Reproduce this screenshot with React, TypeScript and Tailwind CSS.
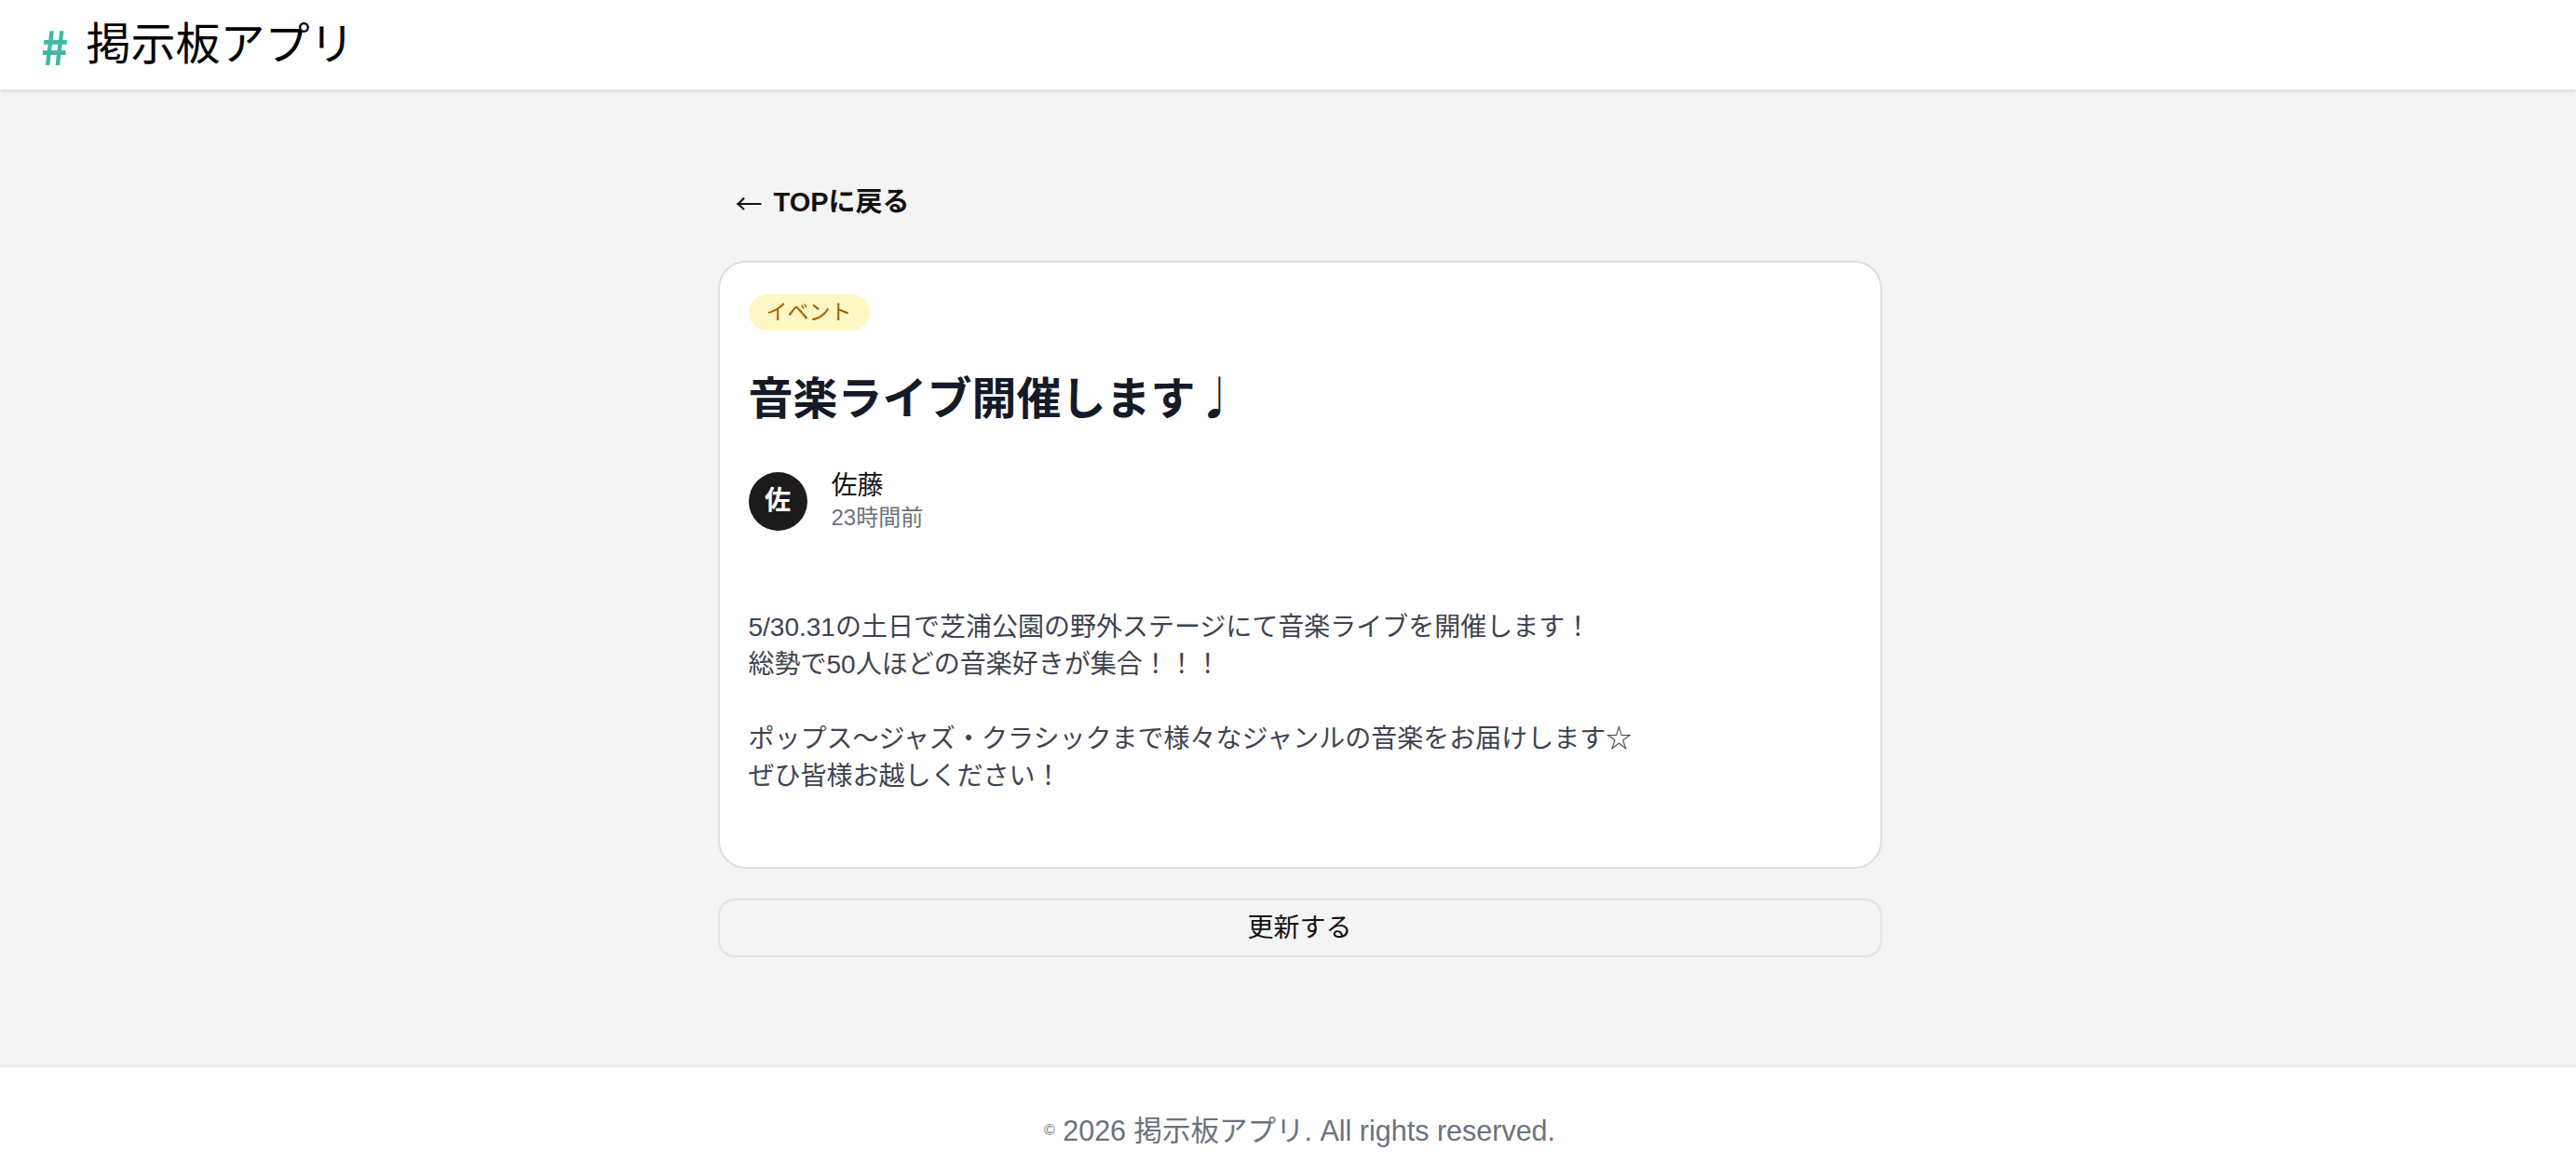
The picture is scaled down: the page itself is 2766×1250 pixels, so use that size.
import React from 'react'

const latin = '[font-family:"Liberation_Sans","Noto_Sans_CJK_JP",sans-serif]'
const cjk = '[font-family:"Noto_Sans_CJK_JP","Noto_Sans",sans-serif]'

const post = {
  category: 'イベント',
  title: '音楽ライブ開催します♩',
  author: '佐藤',
  postedAgo: '23時間前',
  body: [
    ['5/30.31の土日で芝浦公園の野外ステージにて音楽ライブを開催します！', '総勢で50人ほどの音楽好きが集合！！！'],
    ['ポップス〜ジャズ・クラシックまで様々なジャンルの音楽をお届けします☆', 'ぜひ皆様お越しください！'],
  ],
}

const Header = () => (
  <header className="z-10 flex h-[96px] items-center bg-white pl-[44px] shadow-[0_2px_5px_rgba(0,0,0,0.12)]">
    <span className={`text-[50px] font-bold leading-none text-[#3fb8a2] ${cjk}`}>#</span>
    <span className="ml-[19px] text-[48px] leading-none text-black">掲示板アプリ</span>
  </header>
)

const Footer = () => (
  <footer className="border-t-2 border-[#e5e7eb] bg-white pt-[48px] pb-[48px] pl-[25px] text-center">
    <p className="text-[30.5px] leading-[40px] text-[#6b7280]">
      <span className="text-[16px] align-[6px]">©</span> 2026 掲示板アプリ. All rights reserved.
    </p>
  </footer>
)

export default function App() {
  return (
    <div className={`flex min-h-screen flex-col bg-[#f4f4f4] ${latin}`}>
      <Header />

      <main className="flex flex-1 justify-center pl-[25px] pt-[101px] pb-[116px]">
        <div className="w-[1250px]">
          <a href="#" className="ml-[19px] flex items-center gap-[12px] text-[29px] font-bold leading-[40px] text-[#111]">
            <span className={`font-normal ${cjk}`}>←</span>
            <span>TOPに戻る</span>
          </a>

          {/* Post card */}
          <article className="mt-[43px] rounded-[30px] border-2 border-[#dedede] bg-white px-[31px] pt-[34px] pb-[77px]">
            <span className="inline-flex h-[39px] items-center rounded-full bg-[#fef6c3] px-[19px] text-[23px] text-[#a16207]">
              {post.category}
            </span>

            <h1 className={`mt-[39px] text-[48px] font-bold leading-[60px] text-[#151a28] ${cjk}`}>{post.title}</h1>

            <div className="mt-[50px] flex items-center gap-[26px]">
              <div className="flex size-[63px] items-center justify-center rounded-full bg-[#1c1c1c] text-[28px] font-bold text-white">
                {post.author.slice(0, 1)}
              </div>
              <div className="flex flex-col">
                <span className="text-[28px] leading-[36px] text-[#111]">{post.author}</span>
                <span className="text-[24px] leading-[32px] text-[#6b7280]">{post.postedAgo}</span>
              </div>
            </div>

            <div className="mt-[82px] flex flex-col gap-[40px] text-[28px] leading-[40px] text-[#3f4350]">
              {post.body.map((para, i) => (
                <p key={i}>
                  {para.map((line) => (
                    <span key={line} className="block">
                      {line}
                    </span>
                  ))}
                </p>
              ))}
            </div>
          </article>

          <button className="mt-[32px] h-[63px] w-full rounded-[18px] border-2 border-[#e2e2e2] bg-[#f4f4f4] text-[28px] text-[#111]">
            更新する
          </button>
        </div>
      </main>

      <Footer />
    </div>
  )
}
